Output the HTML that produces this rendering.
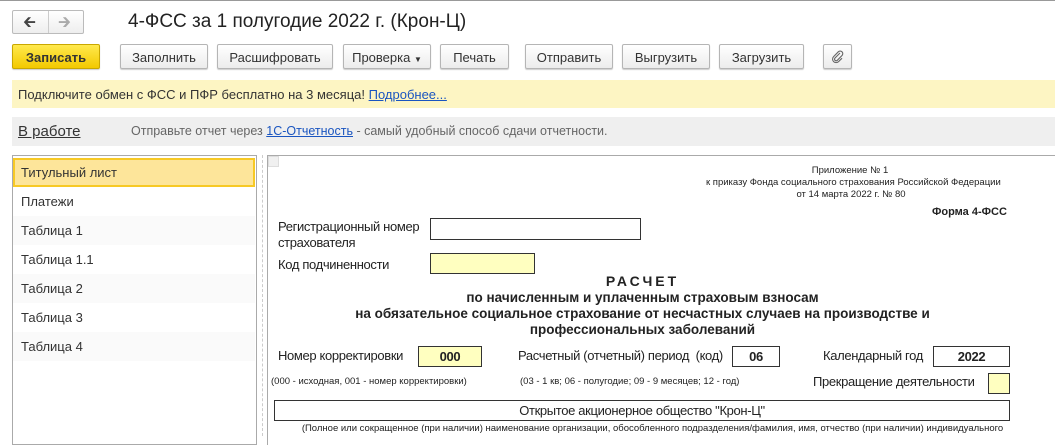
<!DOCTYPE html>
<html><head><meta charset="utf-8"><style>
body{margin:0;width:1055px;height:436px;overflow:hidden;background:#fff;font-family:"Liberation Sans",sans-serif;color:#333;position:relative}
.a{position:absolute;white-space:nowrap}
.btn{position:absolute;top:44px;height:25px;border:1px solid #b5b5b5;border-radius:2px;background:linear-gradient(#fff,#ececec);box-shadow:0 1px 1px rgba(0,0,0,.2);font-size:13px;line-height:25px;text-align:center;color:#333;box-sizing:border-box}
.n{font-family:"Liberation Sans Narrow","Liberation Sans",sans-serif;color:#222;letter-spacing:-0.35px}
.s{letter-spacing:0}
.li{position:absolute;left:13px;width:242px;height:29px;font-size:13px;line-height:29px;padding-left:8px;box-sizing:border-box;color:#333}
.box{position:absolute;border:1px solid #333;box-sizing:border-box}
</style></head><body>
<div class="a" style="left:0;top:0;width:1055px;height:1px;background:#999"></div>
<div class="a" style="left:12px;top:10px;width:72px;height:24px;border:1px solid #bbb;border-radius:2px;background:linear-gradient(#fff,#eee);box-sizing:border-box"></div>
<div class="a" style="left:48px;top:11px;width:1px;height:22px;background:#ccc"></div>
<div class="a" style="left:23px;top:11px;font-size:16px;color:#444">&#129136;</div>
<div class="a" style="left:58px;top:11px;font-size:16px;color:#aaa">&#129138;</div>
<div class="a" style="left:128px;top:11px;font-size:19px;color:#222">4-ФСС за 1 полугодие 2022 г. (Крон-Ц)</div>
<div class="btn" style="left:12px;width:88px;background:linear-gradient(#ffe94d,#f3c900);border-color:#c9a700;font-weight:bold;color:#333">Записать</div>
<div class="btn" style="left:120px;width:88px">Заполнить</div>
<div class="btn" style="left:217px;width:116px">Расшифровать</div>
<div class="btn" style="left:343px;width:88px">Проверка <span style="font-size:8px">▼</span></div>
<div class="btn" style="left:440px;width:69px">Печать</div>
<div class="btn" style="left:525px;width:88px">Отправить</div>
<div class="btn" style="left:622px;width:88px">Выгрузить</div>
<div class="btn" style="left:719px;width:85px">Загрузить</div>
<div class="btn" style="left:823px;width:29px"><svg width="14" height="14" viewBox="0 0 14 14" style="margin-top:5px"><path d="M9 3 L4 8 a1.6 1.6 0 0 0 2.3 2.3 L11 5.5 a2.6 2.6 0 0 0 -3.7 -3.7 L2.6 6.6 a3.5 3.5 0 0 0 5 5 L11 8.2" fill="none" stroke="#666" stroke-width="1.1"/></svg></div>
<div class="a" style="left:12px;top:80px;width:1043px;height:28px;background:#fdf5c3"></div>
<div class="a" style="left:18px;top:87px;font-size:13px;color:#333">Подключите обмен с ФСС и ПФР бесплатно на 3 месяца! <span style="color:#1a55c0;text-decoration:underline">Подробнее...</span></div>
<div class="a" style="left:12px;top:117px;width:1043px;height:29px;background:#efefef"></div>
<div class="a" style="left:18px;top:123px;font-size:15px;color:#333;text-decoration:underline">В работе</div>
<div class="a" style="left:131px;top:124px;font-size:12.5px;color:#666">Отправьте отчет через <span style="color:#1a55c0;text-decoration:underline">1С-Отчетность</span> - самый удобный способ сдачи отчетности.</div>
<div class="a" style="left:12px;top:155px;width:245px;height:290px;border:1px solid #aaa;box-sizing:border-box"></div>
<div class="li" style="top:158px;background:#fde59a;border:2px solid #f7c925;padding-left:6px;line-height:25px">Титульный лист</div>
<div class="li" style="top:187px">Платежи</div>
<div class="li" style="top:216px;background:#fafafa">Таблица 1</div>
<div class="li" style="top:245px">Таблица 1.1</div>
<div class="li" style="top:274px;background:#fafafa">Таблица 2</div>
<div class="li" style="top:303px">Таблица 3</div>
<div class="li" style="top:332px;background:#fafafa">Таблица 4</div>
<div class="a" style="left:262px;top:155px;height:281px;border-left:1px dashed #ccc"></div>
<div class="a" style="left:267px;top:155px;width:788px;height:290px;border-left:1px solid #aaa;border-top:1px solid #aaa;box-sizing:border-box"></div>
<div class="a" style="left:268px;top:156px;width:9px;height:9px;background:#f0f0f0;border:1px solid #ddd"></div>
<div class="a n s" style="left:800px;top:164px;width:100px;text-align:center;font-size:9.5px;line-height:13px">Приложение № 1<br></div>
<div class="a n s" style="left:706px;top:177px;width:290px;text-align:center;font-size:9.5px;line-height:12px">к приказу Фонда социального страхования Российской Федерации<br>от 14 марта 2022 г. № 80</div>
<div class="a n s" style="left:932px;top:206px;font-size:11px;font-weight:bold">Форма 4-ФСС</div>
<div class="a n" style="left:278px;top:219px;font-size:13px;line-height:16px">Регистрационный номер<br>страхователя</div>
<div class="box" style="left:430px;top:218px;width:211px;height:22px"></div>
<div class="a n" style="left:278px;top:257px;font-size:13px">Код подчиненности</div>
<div class="box" style="left:430px;top:253px;width:105px;height:21px;background:#ffffc0"></div>
<div class="a n" style="left:270px;top:273px;width:745px;text-align:center;font-size:14px;font-weight:bold;letter-spacing:3px">РАСЧЕТ</div>
<div class="a n s" style="left:270px;top:290px;width:745px;text-align:center;font-size:13.5px;font-weight:bold;line-height:16px">по начисленным и уплаченным страховым взносам<br>на обязательное социальное страхование от несчастных случаев на производстве и<br>профессиональных заболеваний</div>
<div class="a n" style="left:278px;top:348px;font-size:13px">Номер корректировки</div>
<div class="box n" style="left:418px;top:346px;width:64px;height:21px;background:#ffffc0;text-align:center;font-size:13px;font-weight:bold;line-height:19px">000</div>
<div class="a n" style="left:518px;top:348px;font-size:13px">Расчетный (отчетный) период &nbsp;(код)</div>
<div class="box n" style="left:732px;top:346px;width:48px;height:21px;text-align:center;font-size:13px;font-weight:bold;line-height:19px">06</div>
<div class="a n" style="left:823px;top:348px;font-size:13px">Календарный год</div>
<div class="box n" style="left:933px;top:346px;width:77px;height:21px;text-align:center;font-size:13px;font-weight:bold;line-height:19px">2022</div>
<div class="a n s" style="left:271px;top:376px;font-size:9.5px">(000 - исходная, 001 - номер корректировки)</div>
<div class="a n s" style="left:520px;top:376px;font-size:9.5px">(03 - 1 кв; 06 - полугодие; 09 - 9 месяцев; 12 - год)</div>
<div class="a n" style="left:813px;top:374px;font-size:13px">Прекращение деятельности</div>
<div class="box" style="left:988px;top:373px;width:22px;height:21px;background:#ffffc0"></div>
<div class="box n" style="left:274px;top:400px;width:736px;height:21px;text-align:center;font-size:13px;line-height:20px">Открытое акционерное общество "Крон-Ц"</div>
<div class="a n s" style="left:270px;top:423px;width:765px;text-align:center;font-size:9.5px">(Полное или сокращенное (при наличии) наименование организации, обособленного подразделения/фамилия, имя, отчество (при наличии) индивидуального</div>
</body></html>
